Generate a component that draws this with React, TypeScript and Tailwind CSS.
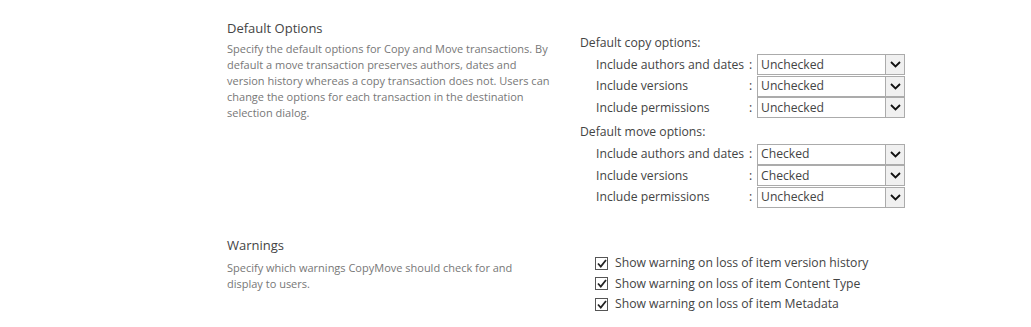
import React from 'react';

const font = { fontFamily: '"Segoe UI", "Open Sans", "Noto Sans", sans-serif' };

interface SelectRowProps {
  label: string;
  value: string;
}

function SelectRow({ label, value }: SelectRowProps) {
  return (
    <div className="flex h-[21.5px] items-center pl-4">
      <span className="w-[153px] whitespace-nowrap">{label}</span>
      <span className="w-[8px]">:</span>
      <div className="flex h-[21px] w-[148px] items-stretch border border-[#ababab] bg-white">
        <span className="flex flex-1 items-center pl-[3px] text-[#444]">{value}</span>
        <span className="flex w-[19px] items-center justify-center border-l border-[#ababab] bg-[#f0f0f0]">
          <svg width="11" height="7" viewBox="0 0 11 7" fill="none">
            <path d="M1 1l4.5 4.5L10 1" stroke="#111" strokeWidth="1.8" />
          </svg>
        </span>
      </div>
    </div>
  );
}

function CheckRow({ label }: { label: string }) {
  return (
    <div className="flex h-[20.5px] items-center pl-[15px]">
      <span className="flex h-[13px] w-[13px] items-center justify-center border border-[#555] bg-white">
        <svg width="10" height="9" viewBox="0 0 10 9" fill="none">
          <path d="M1 4.5l2.8 3L9 1" stroke="#222" strokeWidth="1.8" />
        </svg>
      </span>
      <span className="ml-[7px] whitespace-nowrap">{label}</span>
    </div>
  );
}

export default function App() {
  return (
    <div className="h-[327px] w-[1031px] bg-white pl-[227px] pt-[19px]" style={font}>
      {/* Default options */}
      <div className="flex">
        <div className="w-[353px]">
          <div className="text-[13px] leading-[18px] text-[#444]">Default Options</div>
          <p className="mt-[4px] w-[340px] text-[11px] leading-[16px] text-[#777]">
            Specify the default options for Copy and Move transactions. By
            <br />
            default a move transaction preserves authors, dates and
            <br />
            version history whereas a copy transaction does not. Users can
            <br />
            change the options for each transaction in the destination
            <br />
            selection dialog.
          </p>
        </div>
        <div className="pt-[15px] text-[12.2px] text-[#444]">
          <div className="leading-[18px]">Default copy options:</div>
          <div className="mt-[2px]">
            <SelectRow label="Include authors and dates" value="Unchecked" />
            <SelectRow label="Include versions" value="Unchecked" />
            <SelectRow label="Include permissions" value="Unchecked" />
          </div>
          <div className="mt-[4px] leading-[18px]">Default move options:</div>
          <div className="mt-[3px]">
            <SelectRow label="Include authors and dates" value="Checked" />
            <SelectRow label="Include versions" value="Checked" />
            <SelectRow label="Include permissions" value="Unchecked" />
          </div>
        </div>
      </div>

      {/* Warnings */}
      <div className="mt-[28px] flex">
        <div className="w-[353px]">
          <div className="text-[13px] leading-[18px] text-[#444]">Warnings</div>
          <p className="mt-[6px] w-[320px] text-[11px] leading-[16px] text-[#777]">
            Specify which warnings CopyMove should check for and
            <br />
            display to users.
          </p>
        </div>
        <div className="pt-[17px] text-[12.2px] text-[#444]">
          <CheckRow label="Show warning on loss of item version history" />
          <CheckRow label="Show warning on loss of item Content Type" />
          <CheckRow label="Show warning on loss of item Metadata" />
        </div>
      </div>
    </div>
  );
}
